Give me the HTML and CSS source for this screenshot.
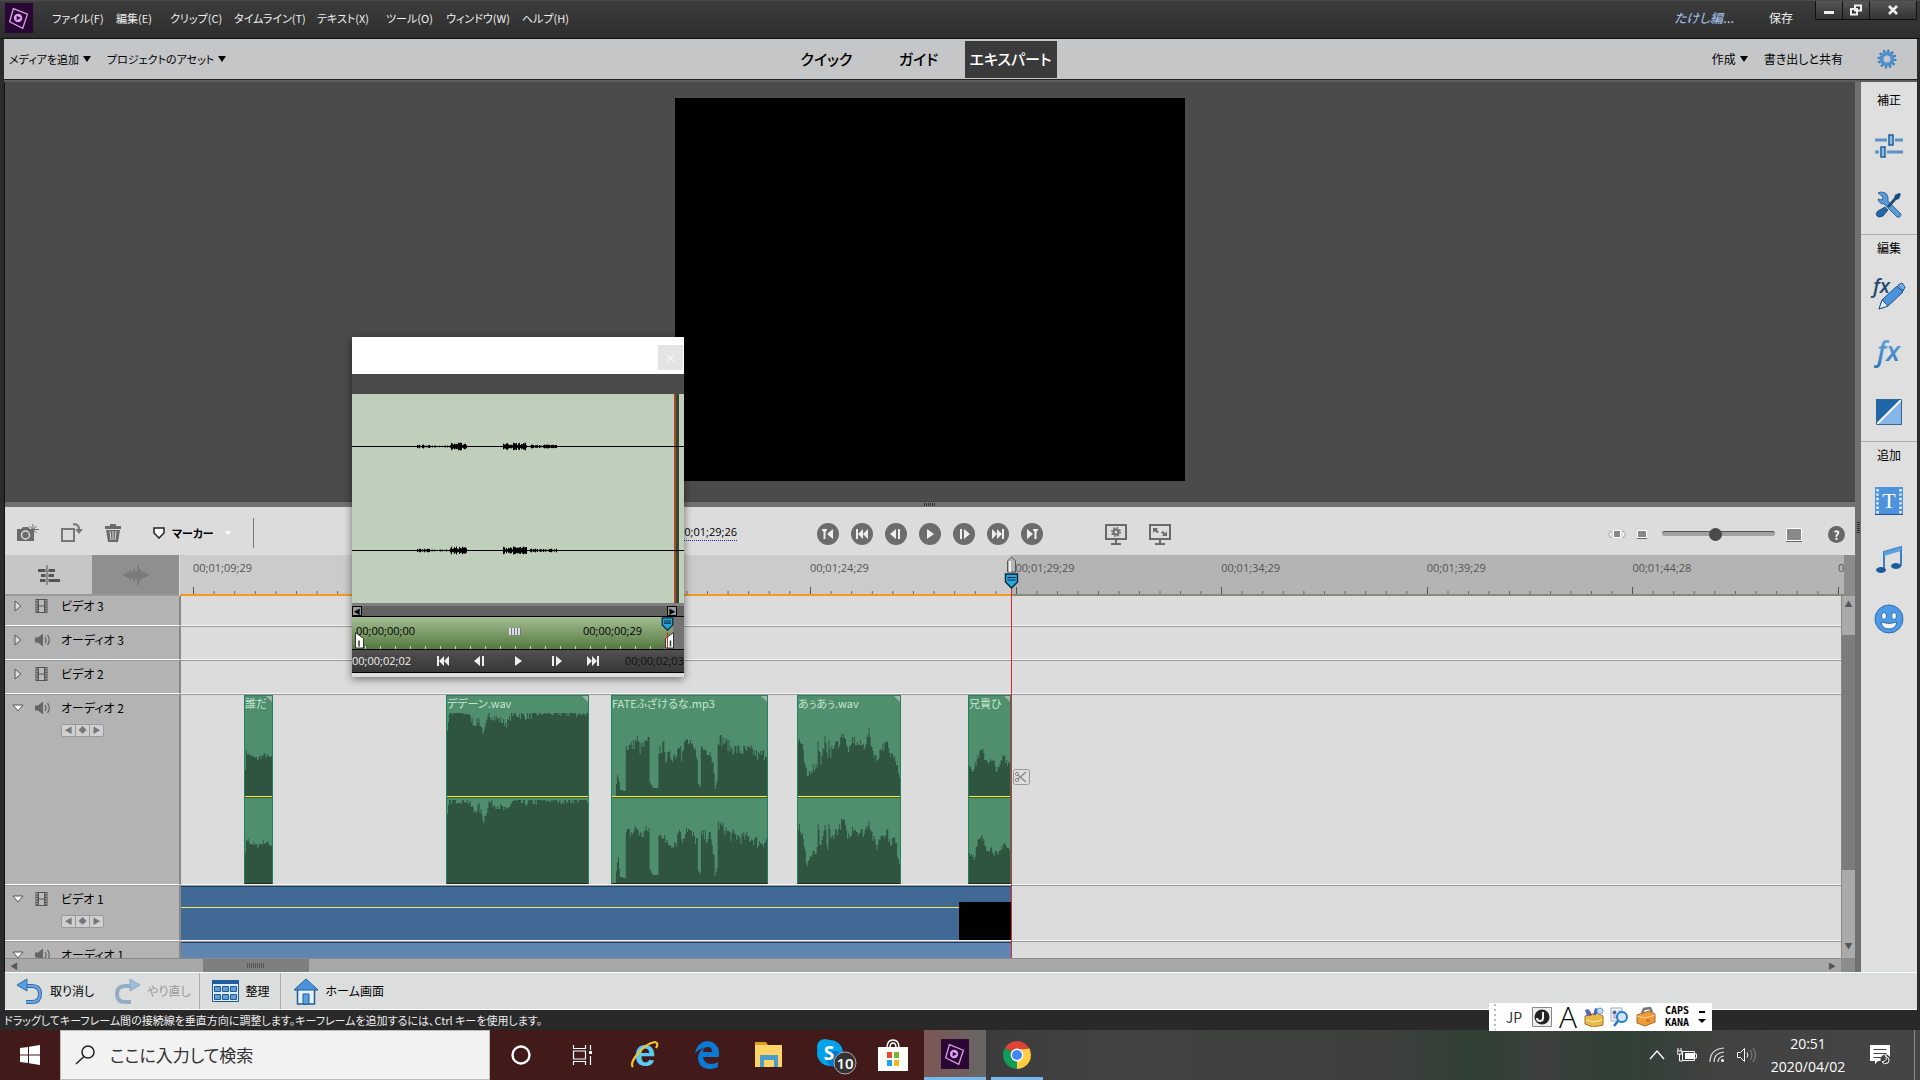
FILE: index.html
```html
<!DOCTYPE html>
<html lang="ja">
<head>
    <meta charset="UTF-8">
    <meta name="viewport" content="width=device-width, initial-scale=1.0">
    <title>Video Editor</title>
    <link rel="stylesheet" href="styles.css">
</head>
<body>
    <!-- Shared icons -->
    <svg class="sprite" aria-hidden="true">
        <symbol id="i-logo" viewBox="0 0 30 32">
            <rect width="30" height="32" fill="#2a0634"/>
            <path d="M9 6l15 6-5 15-14-7z" fill="none" stroke="#d9a0e0" stroke-width="1.4"/>
            <circle cx="14" cy="16" r="4.500" fill="#e29cf5"/>
            <path d="M12.500 13.500l4.500 2.500-4.500 2.500z" fill="#2a0634"/>
        </symbol>
        <symbol id="i-film" viewBox="0 0 12 14">
            <rect width="12" height="14" fill="#555"/>
            <path d="M3.500 1h5v5.500h-5zM3.500 7.500h5v5.500h-5z" fill="#bbb"/>
            <path d="M1.500 1v12M10.500 1v12" stroke="#ccc" stroke-dasharray="1.500 1"/>
        </symbol>
        <symbol id="i-speaker" viewBox="0 0 16 14">
            <path d="M0 4.500h3L8 .5v13L3 9.500H0z" fill="#666"/>
            <path d="M10 4q2 3 0 6M12.500 2q3.500 5 0 10" fill="none" stroke="#666" stroke-width="1.300"/>
        </symbol>
        <symbol id="i-closed" viewBox="0 0 8 12"><path d="M1 1v10l6-5z" fill="#ddd" stroke="#555"/></symbol>
        <symbol id="i-open" viewBox="0 0 12 8"><path d="M1 1h10L6 7z" fill="#fff" stroke="#555"/></symbol>
        <symbol id="i-head" viewBox="0 0 14 16">
            <path d="M1 1h12v8l-6 6-6-6z" fill="#2aa5dc" stroke="#06283c" stroke-width="1.400"/>
            <path d="M3 4.500h8M3 7h8" stroke="#06283c" stroke-width="1.200"/>
        </symbol>
        <symbol id="i-prev" viewBox="0 0 12 10"><path d="M0 0h2v10H0zM7 0v10L2 5zM12 0v10L7 5z" fill="currentColor"/></symbol>
        <symbol id="i-next" viewBox="0 0 12 10"><path d="M10 0h2v10h-2zM0 0v10l5-5zM5 0v10l5-5z" fill="currentColor"/></symbol>
        <symbol id="i-stepback" viewBox="0 0 12 10"><path d="M6 0v10L0 5zM8 0h2v10H8z" fill="currentColor"/></symbol>
        <symbol id="i-stepfwd" viewBox="0 0 12 10"><path d="M6 0v10l6-5zM2 0h2v10H2z" fill="currentColor"/></symbol>
        <symbol id="i-play" viewBox="0 0 12 10"><path d="M3 0v10l7-5z" fill="currentColor"/></symbol>
        <symbol id="i-in" viewBox="0 0 12 10"><path d="M0 0h5v1L3.500 3v7h-2V3L0 1zM11 0v10L5 5z" fill="currentColor"/></symbol>
        <symbol id="i-out" viewBox="0 0 12 10"><path d="M12 0H7v1l1.500 2v7h2V3L12 1zM1 0v10l6-5z" fill="currentColor"/></symbol>
        <symbol id="i-monitor" viewBox="0 0 22 21"><path d="M1 1h20v14H1z" fill="none" stroke="#6a6a6a" stroke-width="2"/><path d="M10 15h2v4h4v2H6v-2h4z" fill="#6a6a6a"/></symbol>
        <linearGradient id="blue" x2="0" y2="1"><stop stop-color="#6bb0ea"/><stop offset="1" stop-color="#2c72b8"/></linearGradient>
    </svg>

    <div class="app">
        <header class="titlebar">
            <svg class="logo"><use href="#i-logo"/></svg>
            <nav class="menu">
                <button>ファイル(F)</button>
                <button>編集(E)</button>
                <button>クリップ(C)</button>
                <button>タイムライン(T)</button>
                <button>テキスト(X)</button>
                <button>ツール(O)</button>
                <button>ウィンドウ(W)</button>
                <button>ヘルプ(H)</button>
            </nav>
            <a class="project" href="#">たけし編...</a>
            <button class="save">保存</button>
            <div class="window-buttons">
                <button aria-label="最小化"><svg viewBox="0 0 12 12"><path d="M1 7h10v3H1z" fill="#eee"/></svg></button>
                <button aria-label="元に戻す"><svg viewBox="0 0 12 12"><path d="M5 1.500h6v5H5zM1 5h6v5.500H1z" fill="#333" stroke="#eee" stroke-width="2"/></svg></button>
                <button class="close" aria-label="閉じる"><svg viewBox="0 0 12 12"><path d="M2 2l8 8M10 2l-8 8" stroke="#eee" stroke-width="2.600"/></svg></button>
            </div>
        </header>

        <div class="navbar">
            <div class="nav-left">
                <button>メディアを追加 <i class="caret"></i></button>
                <button>プロジェクトのアセット <i class="caret"></i></button>
            </div>
            <div class="modes">
                <button>クイック</button>
                <button>ガイド</button>
                <button class="active">エキスパート</button>
            </div>
            <div class="nav-right">
                <button>作成 <i class="caret"></i></button>
                <button>書き出しと共有</button>
                <button class="gear" aria-label="設定">
                    <svg viewBox="0 0 20 20"><circle cx="10" cy="10" r="8" fill="none" stroke="#3f78b0" stroke-width="3" stroke-dasharray="2 2.190"/><circle cx="10" cy="10" r="5.500" fill="none" stroke="#4d90d0" stroke-width="4"/></svg>
                </button>
            </div>
        </div>

        <div class="main">
            <div class="editor">
                <div class="preview"><div class="video"></div></div>
                <div class="splitter"><i></i></div>

                <div class="toolbar">
                    <div class="tools">
                        <button aria-label="フレーム"><svg width="22" height="18" viewBox="0 0 22 18"><path d="M0 5h4l2-2h5l2 2h4v12H0z" fill="#6a6a6a"/><circle cx="8.500" cy="11" r="4" fill="#6a6a6a" stroke="#dcdcdc" stroke-width="1.500"/><path d="M16 0v11M11 5.500h11M12.500 2l7 7M19.500 2l-7 7" stroke="#6a6a6a"/></svg></button>
                        <button aria-label="回転"><svg width="22" height="19" viewBox="0 0 22 19"><path d="M1 6h12v12H1z" fill="none" stroke="#777" stroke-width="2"/><path d="M12 1.500q6-1 6 5" fill="none" stroke="#777" stroke-width="2"/><path d="M14 6h8l-4 5z" fill="#777"/></svg></button>
                        <button aria-label="削除"><svg width="16" height="18" viewBox="0 0 16 18"><path d="M5 0h6v2h5v3H0V2h5zM1 6h14l-2 12H3z" fill="#6a6a6a"/><path d="M5 7l1 9M8 7v9M11 7l-1 9" stroke="#ddd"/></svg></button>
                        <button class="marker"><svg width="12" height="12" viewBox="0 0 12 12"><path d="M1 1h10v5l-5 5-5-5z" fill="#fff" stroke="#222" stroke-width="1.500"/></svg> マーカー <i class="caret pale"></i></button>
                        <span class="divider"></span>
                        <span class="timecode">00;01;29;26</span>
                    </div>
                    <div class="transport">
                        <button aria-label="イン"><svg><use href="#i-in"/></svg></button>
                        <button aria-label="前へ"><svg><use href="#i-prev"/></svg></button>
                        <button aria-label="1フレーム戻る"><svg><use href="#i-stepback"/></svg></button>
                        <button aria-label="再生"><svg><use href="#i-play"/></svg></button>
                        <button aria-label="1フレーム進む"><svg><use href="#i-stepfwd"/></svg></button>
                        <button aria-label="次へ"><svg><use href="#i-next"/></svg></button>
                        <button aria-label="アウト"><svg><use href="#i-out"/></svg></button>
                    </div>
                    <div class="view-tools">
                        <button aria-label="レンダリング"><svg width="22" height="21" viewBox="0 0 22 21"><use href="#i-monitor"/><circle cx="11" cy="8" r="2.500" fill="none" stroke="#6a6a6a" stroke-width="2"/><circle cx="11" cy="8" r="4.200" fill="none" stroke="#6a6a6a" stroke-width="1.600" stroke-dasharray="1.600 1.700"/></svg></button>
                        <button aria-label="全画面"><svg width="22" height="21" viewBox="0 0 22 21"><use href="#i-monitor"/><path d="M4 4h5L7.500 5.500 10 8 8 9 5.500 7 4 9zM18 12h-5l1.500-1.500L12 8.500 14 7l2.500 2.500L18 7z" fill="#6a6a6a"/></svg></button>
                        <div class="zoom">
                            <svg width="18" height="9" viewBox="0 0 18 9"><path d="M5.500.5h7v7h-7z" fill="#888" stroke="#fff"/><path d="M3 1L.5 4.500 3 8M15 1l2.500 3.500L15 8" fill="#fff" stroke="#999"/></svg>
                            <svg width="10" height="9" viewBox="0 0 10 9"><path d="M.5.5h9v7h-9z" fill="#888" stroke="#fff"/><path d="M0 8.500h10" stroke="#666"/></svg>
                            <input type="range" min="0" max="100" value="47" aria-label="ズーム">
                            <svg width="16" height="14" viewBox="0 0 16 14"><path d="M.5.5h15v12H.5z" fill="#888" stroke="#fff"/><path d="M0 13.500h16" stroke="#666"/></svg>
                            <button class="help" aria-label="ヘルプ">?</button>
                        </div>
                    </div>
                </div>

                <div class="timeline">
                    <div class="timeline-tabs">
                        <button aria-label="タイムライン"><svg width="22" height="20" viewBox="0 0 22 20"><path d="M0 4h17v3H0zM3 9h13v3H3zM2 14h20v3H2z" fill="#555"/><path d="M9 0v20" stroke="#c6c6c6" stroke-width="3"/><path d="M9 0v20" stroke="#555"/></svg></button>
                        <button class="active" aria-label="オーディオ"><svg width="26" height="20" viewBox="0 0 26 20"><path d="M1 9v2M3 8v4M5 7v6M7 5v10M9 7v6M11 4v12M13 6v8M15 0v20M17 4v12M19 6v8M21 7v6M23 8v4M25 9v2" stroke="#666"/></svg></button>
                    </div>
                    <div class="ruler">
                        <span>00;01;09;29</span>
                        <span>00;01;14;29</span>
                        <span>00;01;19;29</span>
                        <span>00;01;24;29</span>
                        <span>00;01;29;29</span>
                        <span>00;01;34;29</span>
                        <span>00;01;39;29</span>
                        <span>00;01;44;28</span>
                        <span>00;01;49;28</span>
                    </div>
                    <div class="corner"></div>

                    <div class="tracks">
                        <div class="track first">
                            <div class="track-head"><svg class="toggle closed"><use href="#i-closed"/></svg><svg class="kind"><use href="#i-film"/></svg><span>ビデオ 3</span></div>
                            <div class="lane"></div>
                        </div>
                        <div class="track">
                            <div class="track-head"><svg class="toggle closed"><use href="#i-closed"/></svg><svg class="kind audio"><use href="#i-speaker"/></svg><span>オーディオ 3</span></div>
                            <div class="lane"></div>
                        </div>
                        <div class="track">
                            <div class="track-head"><svg class="toggle closed"><use href="#i-closed"/></svg><svg class="kind"><use href="#i-film"/></svg><span>ビデオ 2</span></div>
                            <div class="lane"></div>
                        </div>
                        <div class="track tall">
                            <div class="track-head"><svg class="toggle"><use href="#i-open"/></svg><svg class="kind audio"><use href="#i-speaker"/></svg><span>オーディオ 2</span>
                                <div class="keys"><button aria-label="前のキーフレーム">◀</button><button aria-label="キーフレーム">◆</button><button aria-label="次のキーフレーム">▶</button></div>
                            </div>
                            <div class="lane" id="audioLane">
                                <svg class="scissors" viewBox="0 0 17 17"><rect x=".5" y=".5" width="16" height="15" rx="2" fill="#ddd" stroke="#999"/><path d="M5 6l8 7M5 10l8-7" stroke="#888" stroke-width="1.300"/><circle cx="4" cy="5" r="1.600" fill="none" stroke="#888"/><circle cx="4" cy="11" r="1.600" fill="none" stroke="#888"/></svg>
                            </div>
                        </div>
                        <div class="track medium">
                            <div class="track-head"><svg class="toggle"><use href="#i-open"/></svg><svg class="kind"><use href="#i-film"/></svg><span>ビデオ 1</span>
                                <div class="keys"><button aria-label="前のキーフレーム">◀</button><button aria-label="キーフレーム">◆</button><button aria-label="次のキーフレーム">▶</button></div>
                            </div>
                            <div class="lane"><div class="video-clip"><i></i></div></div>
                        </div>
                        <div class="track">
                            <div class="track-head"><svg class="toggle"><use href="#i-open"/></svg><svg class="kind audio"><use href="#i-speaker"/></svg><span>オーディオ 1</span></div>
                            <div class="lane"><div class="video-clip linked"></div></div>
                        </div>
                    </div>
                    <div class="vscroll"><span>▲</span><div class="thumb"></div><span>▼</span></div>
                    <div class="hscroll"><span>◀</span><div class="thumb"><i></i></div><span>▶</span></div>
                    <div class="corner"></div>

                    <div class="playhead">
                        <svg class="pin" viewBox="0 0 10 17"><path d="M1 16V5l4-4 4 4v11z" fill="#b4b4b4" stroke="#555"/><path d="M3.500 5v11" stroke="#eee" stroke-width="2"/></svg>
                        <svg class="shield"><use href="#i-head"/></svg>
                    </div>
                </div>
            </div>

            <div class="side-splitter"><i></i></div>

            <aside class="sidebar">
                <section>
                    <h2>補正</h2>
                    <button aria-label="調整"><svg width="28" height="24" viewBox="0 0 28 24"><path d="M0 6h12M20 6h8M0 18h4M12 18h16" stroke="#5b92c8" stroke-width="3"/><path d="M14 1h4v10h-4zM6 13h4v10H6z" fill="#8dc2f0" stroke="#1f5c94" stroke-width="1.500"/></svg></button>
                    <button aria-label="ツール"><svg width="26" height="26" viewBox="0 0 26 26"><path d="M2 1l5 4-1 3-4-1q1 5 6 5l13 13q4 1 4-3L12 9Q13 0 5 0z" fill="#5a9ad6" stroke="#1d558c" stroke-width=".8"/><path d="M25 2l-2-1-4 2-1 3-7 8 2 2 7-8 3-1z" fill="#1a4b7d"/><path d="M9 15l3 3-5 6q-4 2-6 0-2-3 1-5z" fill="#2267a8" stroke="#123f6c" stroke-width=".8"/></svg></button>
                </section>
                <section>
                    <h2>編集</h2>
                    <button aria-label="エフェクト編集"><svg width="34" height="34" viewBox="0 0 34 34"><text x="1" y="16" class="fx" font-size="20" fill="#234a70">fx</text><path d="M7 32l3-9L25 9l6 6-15 14z" fill="#4b93dc" stroke="#1d558c"/><path d="M7 32l3-9 6 6z" fill="#dfeaf5" stroke="#1d558c"/><path d="M26 8l4-2 3 4-2 4z" fill="#77b3ea" stroke="#1d558c"/></svg></button>
                    <button aria-label="エフェクト"><svg width="26" height="30" viewBox="0 0 26 30"><text x="1" y="23" class="fx" font-size="27" fill="url(#blue)">fx</text></svg></button>
                    <button aria-label="トランジション"><svg width="26" height="26" viewBox="0 0 26 26"><path d="M0 0h26v26H0z" fill="#86b6ea"/><path d="M0 0h26L0 26z" fill="#1f66ab"/><path d="M26 0L0 26" stroke="#fff" stroke-width="2"/><path d="M.5.5h25v25H.5z" fill="none" stroke="#33658f"/></svg></button>
                </section>
                <section>
                    <h2>追加</h2>
                    <button aria-label="タイトル"><svg width="28" height="28" viewBox="0 0 28 28"><path d="M0 0h28v28H0z" fill="#4d92da"/><path d="M2.500 2v26M25.500 2v26" stroke="#eaf3fc" stroke-width="2.400" stroke-dasharray="2.400 2"/><text x="14" y="21" text-anchor="middle" font-family="Liberation Serif, serif" font-size="22" fill="#fff">T</text><path d="M0 27.500h28" stroke="#22588c"/></svg></button>
                    <button aria-label="音楽"><svg width="26" height="28" viewBox="0 0 26 28"><path d="M8 24V6l17-5v19" fill="none" stroke="#3b80c4" stroke-width="2"/><path d="M8 6l17-5v4L8 10z" fill="#5a9fe0"/><ellipse cx="5" cy="24" rx="5" ry="3" fill="#1c5c9c"/><ellipse cx="20" cy="20" rx="5" ry="3" fill="#1c5c9c"/></svg></button>
                    <button aria-label="グラフィック"><svg width="30" height="30" viewBox="0 0 30 30"><circle cx="15" cy="15" r="14" fill="#4b9be8" stroke="#2f6fae"/><ellipse cx="10" cy="12" rx="2.500" ry="3.500" fill="#f3f7fc" stroke="#3b6f9f"/><ellipse cx="20" cy="12" rx="2.500" ry="3.500" fill="#f3f7fc" stroke="#3b6f9f"/><path d="M7 18q8 3 16 0-1 7-8 7t-8-7z" fill="#f3f7fc" stroke="#3b6f9f"/></svg></button>
                </section>
            </aside>
        </div>

        <div class="actions">
            <button class="undo"><svg width="26" height="26" viewBox="0 0 26 26"><path d="M8 8h7q8 0 8 8t-8 8H9" fill="none" stroke="#2d6cab" stroke-width="4"/><path d="M8 8h7q8 0 8 8t-8 8H9" fill="none" stroke="#6da8e0" stroke-width="2"/><path d="M0 7l10-6v12z" fill="#5a9fe0" stroke="#2d6cab"/></svg>取り消し</button>
            <button class="redo" disabled><svg width="26" height="26" viewBox="0 0 26 26"><path d="M18 8h-7q-8 0-8 8t8 8h6" fill="none" stroke="#94acc2" stroke-width="4"/><path d="M26 7L16 1v12z" fill="#9cbcd8" stroke="#90a8be"/></svg>やり直し</button>
            <button class="arrange"><svg width="27" height="22" viewBox="0 0 27 22"><path d="M.5.5h26v21H.5z" fill="#dcecf8" stroke="#235a8e"/><path d="M0 0h27v4H0z" fill="#1f5f9e"/><path d="M2.500 6.500h6v5h-6zM10.500 6.500h6v5h-6zM18.500 6.500h6v5h-6zM2.500 14.500h6v5h-6zM10.500 14.500h6v5h-6zM18.500 14.500h6v5h-6z" fill="#5e9ede" stroke="#235a8e"/></svg>整理</button>
            <button class="home"><svg width="26" height="27" viewBox="0 0 26 27"><path d="M4.500 11h17v15h-17z" fill="#e4f1fb" stroke="#1f5c94" stroke-width="1.500"/><path d="M10 16h6v10h-6z" fill="#5a9fe0" stroke="#1f5c94"/><path d="M13 1l12 11H1z" fill="#4b93dc" stroke="#1f5c94"/></svg>ホーム画面</button>
        </div>
        <div class="status">ドラッグしてキーフレーム間の接続線を垂直方向に調整します。キーフレームを追加するには、Ctrl キーを使用します。</div>
    </div>

    <!-- Floating clip trimmer -->
    <div class="trimmer">
        <div class="trimmer-title"><button aria-label="閉じる">×</button></div>
        <div class="trimmer-bar"></div>
        <div class="trimmer-wave"><svg id="trimWave" viewBox="0 0 332 209" preserveAspectRatio="none"></svg></div>
        <div class="trimmer-scroll"><span>◀</span><span>▶</span></div>
        <div class="trimmer-ruler">
            <span>00;00;00;00</span><i></i><span>00;00;00;29</span>
            <svg class="grip-in" viewBox="0 0 9 16"><path d="M.5 0v15.500h8V6z" fill="#fff" stroke="#333"/><path d="M4 8v6" stroke="#333" stroke-width="1.500"/></svg>
            <svg class="grip-out" viewBox="0 0 9 16"><path d="M8.500 0v15.500h-8V6z" fill="#fff" stroke="#333"/><path d="M5.500 8v6" stroke="#333" stroke-width="1.500"/><path d="M2.500 0v16" stroke="#d22"/></svg>
            <svg class="shield"><use href="#i-head"/></svg>
        </div>
        <div class="trimmer-controls">
            <span>00;00;02;02</span>
            <button aria-label="先頭"><svg><use href="#i-prev"/></svg></button>
            <button aria-label="戻る"><svg><use href="#i-stepback"/></svg></button>
            <button aria-label="再生"><svg><use href="#i-play"/></svg></button>
            <button aria-label="進む"><svg><use href="#i-stepfwd"/></svg></button>
            <button aria-label="末尾"><svg><use href="#i-next"/></svg></button>
            <span class="end">00;00;02;03</span>
        </div>
    </div>

    <!-- Language bar -->
    <div class="ime">
        <i class="dots"></i>
        <button class="jp">JP</button>
        <button aria-label="IME"><svg width="20" height="20" viewBox="0 0 20 20"><path d="M.5.5h19v19H.5z" fill="#eee" stroke="#888"/><circle cx="10" cy="10" r="7.500" fill="#222"/><path d="M11 5v6q0 3-3 3-3 0-3-3" fill="none" stroke="#eee" stroke-width="2"/></svg></button>
        <button class="mode">A</button>
        <button aria-label="ツール"><svg width="20" height="20" viewBox="0 0 20 20"><path d="M1 9l12-3 6 3v9l-10 2-8-3z" fill="#e9b94c" stroke="#a66f1c"/><path d="M3 9L1 3l3-1 4 6M9 8l2-7 4 1-3 6" fill="#3f6fc0"/><path d="M6 9L5 2l3 6" fill="#c33"/><circle cx="16" cy="4" r="3" fill="#bcdcf5" stroke="#6f9cc8"/><path d="M2 13l8 2 8-2" stroke="#fff1a8" fill="none"/></svg></button>
        <button aria-label="検索"><svg width="20" height="20" viewBox="0 0 20 20"><path d="M1 1h11v13H1z" fill="#f4f8fd" stroke="#8eaed6"/><path d="M3 4h3v3H3zM8 4h3M3 9h5M3 11h4" fill="#447" stroke="#88a"/><circle cx="12" cy="10" r="5" fill="#cfe6fb" stroke="#2878c8" stroke-width="2"/><path d="M8 14l-4 5" stroke="#2878c8" stroke-width="2.500"/></svg></button>
        <button aria-label="辞書"><svg width="20" height="20" viewBox="0 0 20 20"><path d="M1 8l12-4 6 3v8L9 19l-8-3z" fill="#ef9d3b" stroke="#a9641a"/><path d="M6 6l2-4 6-1 2 4" fill="none" stroke="#777" stroke-width="2.500"/><path d="M1 9l8 2 10-3" fill="none" stroke="#ffd08a"/><path d="M10 12h4v3h-4z" fill="#d87b20"/></svg></button>
        <div class="caps"><span>CAPS</span><span>KANA</span></div>
        <svg class="ime-more" width="8" height="14" viewBox="0 0 8 14"><path d="M1 1h6v2H1zM0 9h8l-4 4z"/></svg>
    </div>

    <footer class="taskbar">
        <button class="start" aria-label="スタート"><svg width="20" height="20" viewBox="0 0 20 20"><path d="M0 3l8-1v7.500H0zM9 1.800L20 0v9.500H9zM0 10.500h8V18l-8-1zM9 10.500h11V20L9 18.200z" fill="#fff"/></svg></button>
        <label class="search">
            <svg width="20" height="20" viewBox="0 0 20 20"><circle cx="13" cy="7" r="6" fill="none" stroke="#222" stroke-width="1.500"/><path d="M9 11.500L1 19" stroke="#222" stroke-width="1.500"/></svg>
            <input type="text" placeholder="ここに入力して検索" aria-label="検索">
        </label>
        <div class="apps">
            <button aria-label="Cortana"><svg width="22" height="22" viewBox="0 0 22 22"><circle cx="11" cy="11" r="8.500" fill="none" stroke="#fff" stroke-width="2.400"/></svg></button>
            <button aria-label="タスク ビュー"><svg width="22" height="22" viewBox="0 0 22 22"><path d="M1.500 1v3.500h12V1M1.500 21v-3.500h12V21M1.500 7h12v8h-12zM18.500 1v5M18.500 12v9" fill="none" stroke="#fff" stroke-width="1.200"/><path d="M17 7h3v3h-3z" fill="#fff"/></svg></button>
            <button aria-label="Internet Explorer"><svg width="30" height="30" viewBox="0 0 30 30"><text x="15" y="26" text-anchor="middle" class="ie">e</text><path d="M3 27Q0 24 6 16 16 3 25 2q4 1 1 6" fill="none" stroke="#f2c62e" stroke-width="2.200"/></svg></button>
            <button aria-label="Edge"><svg width="26" height="28" viewBox="0 0 26 28"><path d="M1 13Q3 1 13 0q11 1 12 11v5H9q1 7 8 7 4 0 7-2v5q-4 2-9 2Q4 27 4 16q1-6 6-9-6 1-9 6zM9 11h9q0-5-4-5-5 0-5 5z" fill="#0a7ad6"/></svg></button>
            <button aria-label="エクスプローラー"><svg width="28" height="26" viewBox="0 0 28 26"><path d="M0 0h11l2 3H0z" fill="#d9a021"/><path d="M0 3h27v22H0z" fill="#fcd468"/><path d="M5 25V13h18v12h-4v-7H9v7z" fill="#4a9ccc"/></svg></button>
            <button aria-label="Skype"><svg width="54" height="44" viewBox="-12 -6 54 44"><circle cx="9" cy="8" r="8" fill="#00a9ed"/><circle cx="14" cy="14" r="13" fill="#00a3ea"/><circle cx="19" cy="20" r="8" fill="#0078d0"/><text x="13" y="21" text-anchor="middle" class="skype">S</text><circle cx="29" cy="24" r="11" fill="#333" stroke="#aaa"/><text x="29" y="30" text-anchor="middle" class="badge">10</text></svg></button>
            <button aria-label="Store"><svg width="30" height="32" viewBox="0 0 30 32"><path d="M9 9q0-8 6-8t6 8M12 9q0-5 3-5t3 5" fill="none" stroke="#fff" stroke-width="1.500"/><path d="M0 8h30v24H0z" fill="#fff"/><path d="M9 13h5v6H9z" fill="#e74c26"/><path d="M16 13h5v6h-5z" fill="#78b52a"/><path d="M9 21h5v6H9z" fill="#1da4e6"/><path d="M16 21h5v6h-5z" fill="#f6b51e"/></svg></button>
            <button class="current" aria-label="Premiere Elements"><svg width="28" height="30"><use href="#i-logo"/></svg></button>
            <button class="running" aria-label="Chrome"><svg width="28" height="28" viewBox="0 0 28 28"><path d="M14 14L1.900 7A14 14 0 0 1 26.100 7z" fill="#db4437"/><path d="M14 14L26.100 7A14 14 0 0 1 14 28z" fill="#ffcd41"/><path d="M14 14v14A14 14 0 0 1 1.900 7z" fill="#109d58"/><path d="M14 8h13l-7 9z" fill="#ffcd41"/><path d="M14 7h12L14 9z" fill="#db4437"/><circle cx="14" cy="14" r="6.400" fill="#fff"/><circle cx="14" cy="14" r="5" fill="#4285f4"/></svg></button>
        </div>
        <div class="tray">
            <svg width="16" height="10" viewBox="0 0 16 10"><path d="M1 9l7-8 7 8" fill="none" stroke="#fff" stroke-width="1.300"/></svg>
            <svg width="20" height="14" viewBox="0 0 20 14"><path d="M5.500 3.500h12v9h-12zM17.500 6h2v4h-2" fill="none" stroke="#fff"/><path d="M8 5h9v6H8z" fill="#fff"/><path d="M1 0v3M4 0v3M0 3h5v3H0zM2.500 6v7h3" fill="none" stroke="#fff"/></svg>
            <svg width="16" height="16" viewBox="0 0 16 16"><path d="M1 15Q1 2 15 1M5 15Q5 6 15 5M9 15q0-5 6-6" fill="none" stroke="#ddd" stroke-width="1.200"/><circle cx="13.500" cy="13.500" r="1.500" fill="#fff"/></svg>
            <svg width="20" height="16" viewBox="0 0 20 16"><path d="M.5 5.500h3l4-4v13l-4-4h-3z" fill="none" stroke="#fff"/><path d="M10 5.500q2 2.500 0 5" fill="none" stroke="#fff"/><path d="M13 3q4 5 0 10M16 1q5 7 0 14" fill="none" stroke="#888"/></svg>
        </div>
        <div class="clock"><span>20:51</span><span>2020/04/02</span></div>
        <button class="notice" aria-label="通知"><svg width="21" height="20" viewBox="0 0 21 20"><path d="M0 0h20v16H8l-3 3v-3H0z" fill="#fff"/><path d="M3.500 4.500h13M3.500 8.500h13M3.500 12.500h8" stroke="#444"/><circle cx="15.500" cy="14.500" r="5" fill="#444"/><path d="M15 10q4 5-3 7 2 3 6 1 3-4-3-8z" fill="#444" stroke="#fff"/></svg></button>
    </footer>

    <script src="timeline.js"></script>
</body>
</html>
```
FILE: styles.css
```css
/* Base */
* {
    box-sizing: border-box;
}

body {
    margin: 0;
    min-height: 100vh;
    display: flex;
    flex-direction: column;
    background: #2b2b2b;
    color: #000;
    font-family: "Noto Sans CJK JP", sans-serif;
    font-size: 12px;
    line-height: 16px;
    font-feature-settings: "palt";
}

button {
    display: flex;
    align-items: center;
    justify-content: center;
    margin: 0;
    padding: 0;
    border: none;
    background: none;
    color: inherit;
    font: inherit;
    font-feature-settings: inherit;
    white-space: nowrap;
}

svg {
    display: block;
    flex: none;
}

.sprite {
    position: absolute;
    width: 0;
    height: 0;
}

.app {
    flex: 1;
    display: flex;
    flex-direction: column;
}

.caret {
    margin-left: 4px;
    border: 4px solid transparent;
    border-top: 6px solid #000;
    border-bottom: 0;
}

.caret.pale {
    border-width: 3px;
    border-top: 4px solid #fff;
    border-bottom: 0;
}

/* Title bar */
.titlebar {
    display: flex;
    align-items: center;
    height: 39px;
    padding: 0 3px 3px 4px;
    background: linear-gradient(#3c3c3c, #2d2d2d);
    border-top: 1px solid #4a4a4a;
    border-bottom: 1px solid #111;
    color: #f0f0f0;
}

.logo {
    width: 30px;
    height: 30px;
}

.menu {
    flex: 1;
    display: grid;
    grid-template-columns: 64px 54px 64px 83px 69px 60px 76px 60px;
    padding-left: 18px;
    font-size: 11px;
}

.menu button {
    justify-content: flex-start;
}

.project {
    width: 95px;
    color: #a9c8f0;
    font-size: 13px;
    font-style: italic;
    text-decoration: none;
}

.window-buttons {
    align-self: flex-start;
    display: flex;
    height: 19px;
    margin-left: 22px;
    border: 1px solid #111;
    border-top: none;
    background: linear-gradient(#555, #333);
}

.window-buttons button {
    width: 27px;
    border-right: 1px solid #111;
}

.window-buttons .close {
    width: 46px;
    border-right: none;
}

.window-buttons svg {
    width: 12px;
    height: 12px;
}

/* Mode bar */
.navbar {
    display: grid;
    grid-template-columns: 1fr auto 1fr;
    height: 41px;
    margin: 0 3px 0 4px;
    background: #c5c6c8;
    border-bottom: 1px solid #222;
}

.nav-left,
.nav-right {
    display: flex;
    align-items: center;
    gap: 16px;
    padding-left: 5px;
    font-size: 11px;
}

.nav-right {
    justify-content: flex-end;
    padding-right: 20px;
    font-size: 12px;
}

.gear {
    margin-left: 18px;
}

.gear svg {
    width: 20px;
    height: 20px;
}

.modes {
    display: flex;
    align-items: center;
    padding-right: 84px;
    font-size: 15px;
    font-weight: 500;
}

.modes button {
    width: 92px;
    height: 37px;
}

.modes .active {
    background: #3a3a3a;
    color: #fff;
}

/* Editor area */
.main {
    flex: 1;
    display: flex;
    margin: 0 3px 0 4px;
    border-top: 2px solid #5e5e5e;
}

.editor {
    flex: 1;
    min-width: 0;
    display: flex;
    flex-direction: column;
    border-left: 1px solid #111;
}

.preview {
    flex: 1 0 419px;
    display: flex;
    justify-content: center;
    padding: 16px 0 20px;
    background: #4b4b4b;
}

.video {
    aspect-ratio: 4 / 3;
    background: #000;
}

.splitter {
    display: flex;
    align-items: center;
    justify-content: center;
    height: 6px;
    background: #717171;
    border-top: 1px solid #444;
}

.splitter i {
    width: 12px;
    height: 3px;
    background: repeating-linear-gradient(90deg, #333 0 1px, transparent 1px 2px);
}

/* Toolbar */
.toolbar {
    display: grid;
    grid-template-columns: 1fr auto 1fr;
    height: 48px;
    padding-bottom: 1px;
    background: #dcdcdc;
}

.tools,
.view-tools,
.transport,
.zoom {
    display: flex;
    align-items: center;
}

.tools {
    gap: 22px;
    padding: 4px 80px 0 12px;
}

.view-tools {
    gap: 22px;
    padding: 8px 10px 0 62px;
}

.marker {
    gap: 7px;
    margin-left: 10px;
    font-size: 11px;
    font-weight: 700;
}

.divider {
    width: 1px;
    height: 30px;
    background: #777;
}

.timecode {
    margin-left: auto;
    border-bottom: 1px dotted #22a;
    font-family: "Open Sans", sans-serif;
    font-size: 11px;
}

.transport {
    gap: 12px;
    padding-top: 6px;
}

.transport button {
    width: 22px;
    height: 22px;
    border-radius: 50%;
    background: #6c6c6c;
    color: #eee;
}

.transport svg {
    width: 12px;
    height: 10px;
}

.zoom {
    gap: 11px;
    margin-left: auto;
}

.zoom input {
    appearance: none;
    width: 113px;
    height: 5px;
    margin: 0 0 2px 4px;
    border-radius: 3px;
    border-top: 1px solid #555;
    background: #a2a2a2;
}

.zoom input::-webkit-slider-thumb {
    appearance: none;
    width: 13px;
    height: 13px;
    border-radius: 50%;
    background: #4a4a4a;
}

.help {
    width: 17px;
    height: 17px;
    margin-left: 15px;
    border-radius: 50%;
    background: #666;
    color: #fff;
    font-weight: 700;
}

/* Timeline */
.timeline {
    position: relative;
    display: grid;
    grid-template-columns: 175px 1fr 14px;
    background: #8c8c8c;
}

.timeline-tabs {
    display: flex;
    padding-bottom: 2px;
    border-right: 1px solid #ddd;
    background: #999;
}

.timeline-tabs button {
    flex: 1;
    background: #c6c6c6;
}

.timeline-tabs .active {
    background: #8f8f8f;
}

/* The ruler runs a little way over the scrollbar column */
.ruler {
    display: grid;
    grid-template-columns: repeat(8, 1fr) 6px;
    height: 41px;
    margin-right: -3px;
    padding-left: 13px;
    overflow: hidden;
    background:
        linear-gradient(90deg, #f29a1e 831px, #8a8a7a 831px) bottom / 100% 2px no-repeat,
        linear-gradient(90deg, #cbcbcb 831px, #b4b4b4 831px);
}

.ruler span {
    height: 39px;
    padding-top: 5px;
    overflow: hidden;
    background:
        linear-gradient(#555, #555) 0 100% / 1px 7px no-repeat,
        linear-gradient(90deg, #666 1px, transparent 1px) 0 36px / 10% 3px repeat-x;
    color: #555;
    font-family: "Open Sans", sans-serif;
    font-size: 11px;
}

.ruler span:last-child {
    background: linear-gradient(#555, #555) 0 100% / 1px 7px no-repeat;
}

.tracks {
    grid-column: 1 / 3;
    height: 362px;
    overflow: hidden;
}

.track {
    display: flex;
    height: 34px;
    border-bottom: 1px solid #999;
}

.track.first {
    margin-top: -3px;
}

.track.tall {
    height: 191px;
}

.track.medium {
    height: 56px;
}

.track-head {
    display: grid;
    grid-template-columns: 23px 26px 1fr;
    grid-auto-rows: 16px;
    align-items: center;
    row-gap: 6px;
    width: 176px;
    padding: 5px 0 0 7px;
    background: #b3b3b3;
    border-right: 2px solid #888;
    border-bottom: 1px solid #fff;
}

.toggle {
    width: 12px;
    height: 8px;
}

.toggle.closed {
    height: 12px;
}

.kind {
    width: 13px;
    height: 14px;
}

.kind.audio {
    width: 16px;
}

.keys {
    grid-column: 3;
    display: flex;
    width: 43px;
    height: 13px;
    border: 1px solid #999;
    border-radius: 2px;
    background: #d0d0d0;
}

.keys button {
    flex: 1;
    color: #777;
    font-size: 8px;
    line-height: 10px;
}

.keys button + button {
    border-left: 1px solid #999;
}

.lane {
    position: relative;
    flex: 1;
    background: #dcdcdc;
    border-bottom: 1px solid #f4f4f4;
}

/* Clips sit on the time axis */
.clip {
    position: absolute;
    top: 0;
    bottom: 0;
    overflow: hidden;
    background: #4f8f6d;
    border: 1px solid #24805f;
    border-bottom-color: #1c2f25;
    color: #c4e6d2;
    font-size: 11px;
    line-height: 14px;
    white-space: nowrap;
}

.clip::after {
    content: "";
    position: absolute;
    top: 0;
    right: 0;
    border: 3px solid transparent;
    border-top-color: #a0b5a8;
    border-right-color: #a0b5a8;
}

.clip svg {
    position: absolute;
    top: 0;
    left: 0;
    width: 100%;
    height: 100%;
}

.clip span {
    position: relative;
}

.video-clip {
    position: relative;
    width: 830px;
    height: 100%;
    background: linear-gradient(#f2ee58, #f2ee58) 0 20px / 100% 1px no-repeat, #406a95;
    border-top: 1px solid #1c3f66;
}

.video-clip.linked {
    background: #5f85b0;
}

.video-clip i {
    position: absolute;
    right: 0;
    bottom: 0;
    width: 52px;
    height: 38px;
    background: #000;
}

.scissors {
    position: absolute;
    left: 832px;
    top: 74px;
    width: 17px;
    height: 17px;
}

.playhead {
    position: absolute;
    left: 1006px;
    top: 33px;
    bottom: 14px;
    width: 1px;
    background: #d03030;
}

.playhead svg {
    position: absolute;
    left: -5px;
    top: -32px;
    width: 11px;
    height: 17px;
}

.playhead .shield {
    left: -7px;
    top: -15px;
    width: 15px;
    height: 16px;
}

.vscroll {
    display: flex;
    flex-direction: column;
    justify-content: space-between;
    padding-bottom: 4px;
    background: #aaa;
    border-left: 1px solid #888;
    color: #555;
    font-size: 8px;
    text-align: center;
}

.vscroll .thumb {
    height: 235px;
    margin-bottom: 46px;
    background: #7c7c7c;
}

.hscroll {
    grid-column: 1 / 3;
    display: flex;
    align-items: center;
    height: 14px;
    padding: 0 5px;
    background: #a8a8a8;
    border-top: 1px solid #888;
    color: #555;
    font-size: 8px;
}

.hscroll span:first-child {
    width: 193px;
}

.hscroll span:last-child {
    margin-left: auto;
}

.hscroll .thumb {
    display: flex;
    align-items: center;
    justify-content: center;
    width: 106px;
    height: 13px;
    background: #7f7f7f;
}

.hscroll i {
    width: 18px;
    height: 5px;
    background: repeating-linear-gradient(90deg, #555 0 1px, transparent 1px 2px);
}

/* Right hand panel */
.side-splitter {
    display: flex;
    align-items: center;
    width: 6px;
    background: #707070;
}

.side-splitter i {
    width: 3px;
    height: 11px;
    margin: 0 auto;
    background: repeating-linear-gradient(#333 0 1px, transparent 1px 2px);
}

.sidebar {
    width: 56px;
    background: #dfdfdf;
}

.sidebar section {
    padding: 4px 0 0;
    border-bottom: 1px solid #aaa;
}

.sidebar section:first-child {
    padding-top: 9px;
}

.sidebar section:last-child {
    border-bottom: none;
}

.sidebar h2 {
    margin: 0 0 7px;
    font-size: 12px;
    font-weight: 400;
    line-height: 18px;
    text-align: center;
}

.sidebar button {
    width: 100%;
    height: 59px;
}

.sidebar svg {
    overflow: visible;
}

.fx {
    font-family: "Open Sans", sans-serif;
    font-style: italic;
    font-weight: 600;
}

/* Bottom actions */
.actions {
    display: flex;
    height: 38px;
    margin: 0 3px 0 5px;
    background: #dcdedd;
    border-top: 1px solid #fff;
    border-bottom: 1px solid #fff;
}

.actions button {
    gap: 7px;
    padding: 0 12px;
}

.actions .undo {
    padding-right: 8px;
}

.actions .redo {
    color: #999;
    padding-right: 8px;
    border-right: 1px solid #aaa;
}

.actions .arrange {
    padding: 0 10px 0 12px;
    border-right: 1px solid #aaa;
}

.status {
    height: 20px;
    padding-left: 4px;
    background: #292929;
    color: #eee;
    font-size: 11px;
    line-height: 20px;
}

/* Clip trimmer window */
.trimmer {
    position: absolute;
    left: 352px;
    top: 337px;
    width: 332px;
    padding-bottom: 4px;
    background: #dcdcdc;
    box-shadow: 0 2px 8px rgba(0, 0, 0, 0.5);
    overflow: hidden;
}

.trimmer-title {
    display: flex;
    justify-content: flex-end;
    height: 37px;
    padding: 8px 1px 4px;
    background: #fff;
}

.trimmer-title button {
    width: 25px;
    background: #e4e4e4;
    color: #fafafa;
}

.trimmer-bar {
    height: 20px;
    background: #4a4a4a;
}

.trimmer-wave {
    background: linear-gradient(90deg, transparent 322px, #a8482a 322px 324px, #35482e 324px 327px, transparent 327px), #bfcfbc;
}

.trimmer-wave svg {
    width: 100%;
    height: 209px;
}

.trimmer-scroll {
    display: flex;
    justify-content: space-between;
    height: 14px;
    padding: 0 7px 0 0;
    background: #626262;
    border-top: 3px solid #808080;
    border-bottom: 1px solid #000;
}

.trimmer-scroll span {
    width: 10px;
    border: 1px solid #000;
    background: #999;
    font-size: 7px;
    line-height: 8px;
    text-align: center;
}

.trimmer-ruler {
    position: relative;
    display: flex;
    align-items: center;
    justify-content: space-between;
    height: 33px;
    padding: 0 42px 4px 4px;
    background:
        linear-gradient(90deg, transparent 321px, #747474 321px),
        linear-gradient(90deg, #c8d8c0 1px, transparent 1px) 13px 29px / 15px 3px repeat-x,
        linear-gradient(#a3bd93, #55793f);
    border-bottom: 1px solid #000;
    font-family: "Open Sans", sans-serif;
    font-size: 11px;
}

.trimmer-ruler i {
    width: 12px;
    height: 7px;
    margin-left: 32px;
    background: repeating-linear-gradient(90deg, #ddd 0 2px, #778 2px 3px);
}

.trimmer-ruler svg {
    position: absolute;
    bottom: 0;
    left: 3px;
    width: 9px;
    height: 17px;
}

.trimmer-ruler .grip-out {
    left: 313px;
}

.trimmer-ruler .shield {
    top: 0;
    left: 308px;
    width: 15px;
    height: 14px;
}

.trimmer-controls {
    display: flex;
    align-items: center;
    justify-content: space-between;
    height: 23px;
    background: linear-gradient(#505050, #383838);
    border-bottom: 1px solid #000;
    color: #eee;
    font-family: "Open Sans", sans-serif;
    font-size: 11px;
}

.trimmer-controls .end {
    color: #111;
}

.trimmer-controls svg {
    width: 12px;
    height: 10px;
}

/* Language bar */
.ime {
    position: absolute;
    right: 208px;
    bottom: 49px;
    display: flex;
    align-items: center;
    gap: 6px;
    width: 223px;
    height: 28px;
    padding: 0 6px 0 5px;
    background: #fff;
}

.dots {
    width: 2px;
    height: 26px;
    background: repeating-linear-gradient(#bbb 0 2px, transparent 2px 5px);
}

.jp {
    width: 24px;
    color: #333;
    font-size: 14px;
}

.mode {
    width: 20px;
    font-family: "Open Sans", sans-serif;
    font-size: 30px;
    font-weight: 300;
    line-height: 28px;
}

.caps {
    display: flex;
    flex-direction: column;
    margin-left: 3px;
    font-family: "DejaVu Sans Mono", monospace;
    font-size: 10px;
    font-weight: 700;
    line-height: 12px;
}

.ime-more {
    margin-left: auto;
}

/* Windows taskbar */
.taskbar {
    display: flex;
    height: 50px;
    background: linear-gradient(90deg, #431a1a 924px, #3c3c3c 985px, #424242 1100px, #3c403c 1400px, #2f4034 1480px, #3d403d 1540px, #2f4034 1620px, #424242 1720px, #454545);
    color: #fff;
}

.start {
    width: 60px;
}

.search {
    display: flex;
    align-items: center;
    gap: 13px;
    width: 430px;
    padding-left: 14px;
    background: #f2f2f2;
    border: 1px solid #bbb;
}

.search input {
    flex: 1;
    min-width: 0;
    border: none;
    outline: none;
    background: none;
    font: inherit;
    font-feature-settings: inherit;
    font-size: 17px;
    line-height: 24px;
}

.search input::placeholder {
    color: #333;
}

.apps {
    display: flex;
}

.apps button {
    width: 62px;
}

.apps .current {
    background: linear-gradient(90deg, #7c5654, #666);
    border-bottom: 3px solid #76b9ed;
}

.apps .running {
    position: relative;
}

.apps .running::after {
    content: "";
    position: absolute;
    left: 5px;
    right: 5px;
    bottom: 0;
    height: 3px;
    background: #76b9ed;
}

.ie {
    font-family: "Liberation Sans", sans-serif;
    font-size: 38px;
    font-weight: 700;
    fill: #5ccbf2;
}

.skype,
.badge {
    font-family: "Open Sans", sans-serif;
    font-size: 19px;
    font-weight: 700;
    fill: #fff;
}

.badge {
    font-size: 15px;
    font-weight: 600;
}

.tray {
    display: flex;
    align-items: center;
    gap: 12px;
    margin-left: auto;
}

.clock {
    display: flex;
    flex-direction: column;
    justify-content: center;
    width: 102px;
    font-family: "Open Sans", sans-serif;
    font-size: 14px;
    line-height: 23px;
    text-align: center;
}

.notice {
    width: 56px;
    margin-right: 5px;
    padding-right: 12px;
    border-right: 1px solid #888;
}
```
FILE: timeline.js
```js
// Audio clips: position on the lane and the outline of the sound,
// as pairs of x (px) and level (px)
const clips = [
    { name: "誰だ", left: 63, width: 29, jitter: 5,
      shape: [0, 28, 1, 44, 6, 40, 12, 37, 20, 41, 28, 38] },
    { name: "デデーン.wav", left: 265, width: 143, jitter: 8,
      shape: [0, 66, 2, 83, 20, 83, 27, 72, 32, 76, 37, 62, 42, 81, 50, 78, 60, 72, 66, 82, 80, 80, 98, 83, 142, 83] },
    { name: "FATEふざけるな.mp3", left: 430, width: 157, jitter: 13,
      shape: [0, 0, 3, 0, 4, 18, 6, 22, 8, 6, 13, 5, 14, 49, 20, 50, 25, 56, 28, 47, 37, 54, 38, 14, 41, 8, 46, 8, 47, 46, 53, 50, 54, 38, 60, 40, 65, 42, 67, 52, 69, 56, 70, 40, 75, 56, 81, 47, 86, 42, 87, 12, 89, 9, 90, 47, 99, 46, 103, 28, 104, 7, 106, 15, 107, 58, 114, 54, 120, 48, 131, 45, 141, 45, 148, 40, 157, 43] },
    { name: "あぅあぅ.wav", left: 616, width: 104, jitter: 10,
      shape: [0, 54, 1, 57, 4, 48, 7, 28, 9, 19, 12, 26, 19, 31, 20, 57, 23, 33, 27, 57, 30, 33, 31, 60, 33, 43, 37, 51, 41, 53, 46, 64, 49, 49, 53, 45, 55, 57, 60, 52, 67, 50, 72, 63, 76, 45, 80, 36, 84, 48, 91, 52, 93, 40, 98, 44, 103, 22] },
    { name: "兄貴ひ", left: 787, width: 43, jitter: 9,
      shape: [0, 31, 5, 27, 9, 40, 13, 45, 17, 37, 25, 33, 30, 25, 36, 41, 40, 34, 43, 33] }
];

const svgNs = "http://www.w3.org/2000/svg";
let seed = 7;

function random() {
    seed = (seed * 16807) % 2147483647;
    return seed / 2147483647;
}

function levelAt(shape, x) {
    for (let i = 0; i < shape.length - 2; i += 2) {
        if (x <= shape[i + 2]) {
            const t = (x - shape[i]) / (shape[i + 2] - shape[i]);
            return shape[i + 1] + (shape[i + 3] - shape[i + 1]) * t;
        }
    }
    return shape[shape.length - 1];
}

function addPath(svg, d, name, value) {
    const path = document.createElementNS(svgNs, "path");
    path.setAttribute("d", d);
    path.setAttribute(name, value);
    svg.appendChild(path);
}

function wavePath(clip, base) {
    let d = "M0 " + base;
    for (let x = 0; x < clip.width; x++) {
        const level = levelAt(clip.shape, x);
        const y = base - Math.min(83, Math.max(0, Math.round(level + (level > 15 ? (random() - 0.5) * clip.jitter : 0))));
        d += "V" + y + "H" + (x + 1);
    }
    return d + "V" + base + "z";
}

const lane = document.getElementById("audioLane");
clips.forEach(clip => {
    const el = document.createElement("div");
    el.className = "clip";
    el.style.left = clip.left + "px";
    el.style.width = clip.width + "px";

    const svg = document.createElementNS(svgNs, "svg");
    svg.setAttribute("viewBox", "0 0 " + clip.width + " 187");
    svg.setAttribute("preserveAspectRatio", "none");
    addPath(svg, wavePath(clip, 100), "fill", "#2f5541");
    addPath(svg, wavePath(clip, 187), "fill", "#2f5541");
    addPath(svg, "M0 100.5H" + clip.width, "stroke", "#eef25c");
    addPath(svg, "M0 101.5H" + clip.width, "stroke", "#465810");

    const name = document.createElement("span");
    name.textContent = clip.name;
    el.append(svg, name);
    lane.appendChild(el);
});

// Trimmer window: flat line with short bursts (start, end, level)
const bursts = [[65, 78, 2], [78, 98, 1], [98, 115, 4], [151, 175, 4], [178, 186, 2], [187, 205, 2]];
const trim = document.getElementById("trimWave");
[52.5, 156.5].forEach(mid => {
    let d = "M0 " + mid + "H332";
    bursts.forEach(([from, to, level]) => {
        for (let x = from; x < to; x++) {
            const h = level * (0.3 + random() * 0.7);
            d += "M" + (x + 0.5) + " " + (mid - h) + "v" + h * 2;
        }
    });
    addPath(trim, d, "stroke", "#000");
});
```
